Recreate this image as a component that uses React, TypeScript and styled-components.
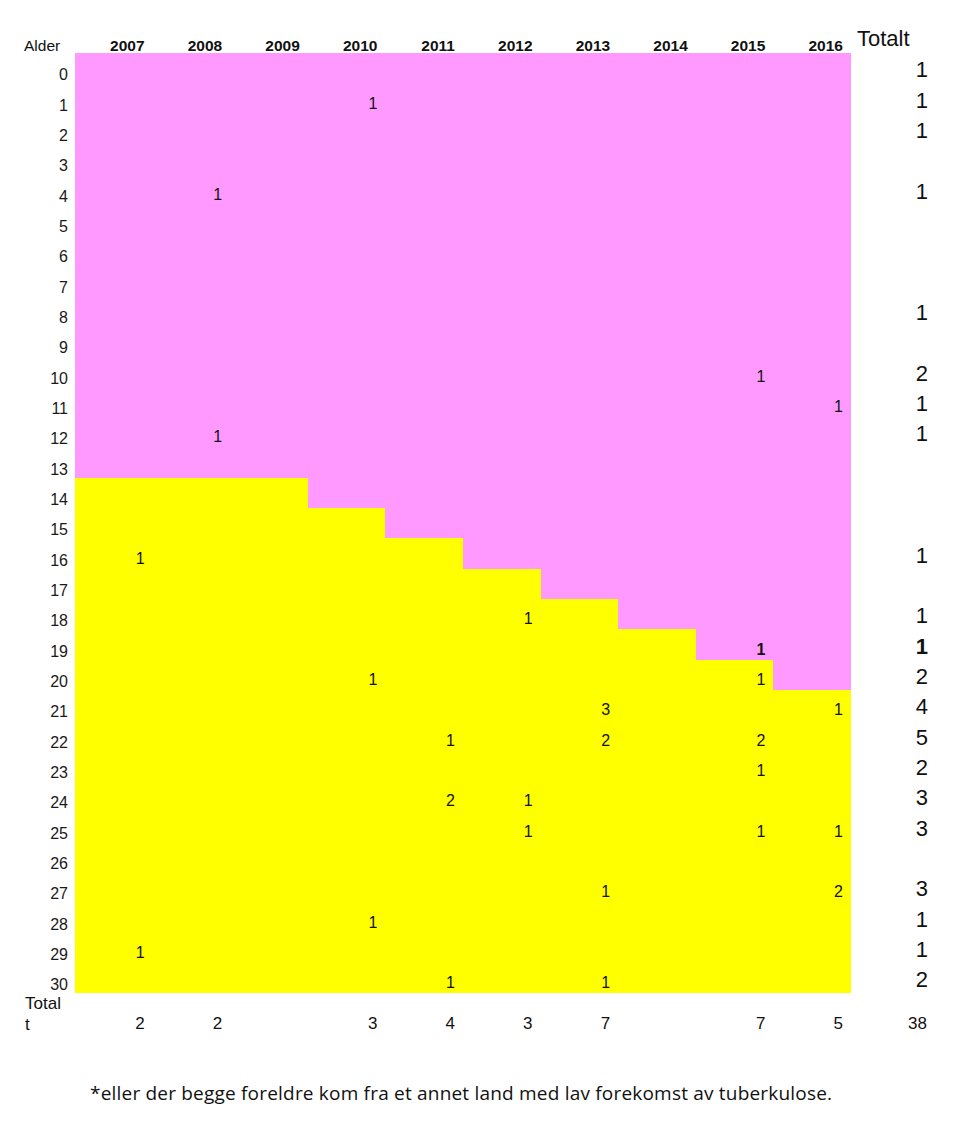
import React from 'react'
import styled, { createGlobalStyle } from 'styled-components'

const GlobalStyle = createGlobalStyle`
  body {
    margin: 0;
    background: #fff;
    color: #111;
    font-family: 'Liberation Sans', Arial, sans-serif;
  }
`

const years = [2007, 2008, 2009, 2010, 2011, 2012, 2013, 2014, 2015, 2016]
// første alder som er gul, per år
const yellowFrom = [14, 14, 14, 15, 16, 17, 18, 19, 20, 21]

// alder -> { kolonneindeks: antall }
const cases: Record<number, Record<number, number>> = {
  1: { 3: 1 },
  4: { 1: 1 },
  10: { 8: 1 },
  11: { 9: 1 },
  12: { 1: 1 },
  16: { 0: 1 },
  18: { 5: 1 },
  19: { 8: 1 },
  20: { 3: 1, 8: 1 },
  21: { 6: 3, 9: 1 },
  22: { 4: 1, 6: 2, 8: 2 },
  23: { 8: 1 },
  24: { 4: 2, 5: 1 },
  25: { 5: 1, 8: 1, 9: 1 },
  27: { 6: 1, 9: 2 },
  28: { 3: 1 },
  29: { 0: 1 },
  30: { 4: 1, 6: 1 },
}

const rowTotals: Record<number, number> = {
  0: 1, 1: 1, 2: 1, 4: 1, 8: 1, 10: 2, 11: 1, 12: 1, 16: 1, 18: 1,
  19: 1, 20: 2, 21: 4, 22: 5, 23: 2, 24: 3, 25: 3, 27: 3, 28: 1, 29: 1, 30: 2,
}

const yearTotals = [2, 2, null, 3, 4, 3, 7, null, 7, 5]
const boldRow = 19

const ages = Array.from({ length: 31 }, (_, i) => i)

const Page = styled.div`
  width: 970px;
  min-height: 1134px;
`

const Sheet = styled.div`
  display: grid;
  grid-template-columns: 53px repeat(10, 77.6px) 79px;
  grid-template-rows: 53px repeat(31, 30.33px) auto;
  margin-left: 22px;
`

const Cell = styled.div`
  display: flex;
  align-items: flex-end;
  line-height: 1;
  white-space: nowrap;
`

const CornerLabel = styled(Cell)`
  font-size: 15.5px;
  padding-left: 2px;
`

const YearHead = styled(Cell)`
  justify-content: flex-end;
  font-size: 15.5px;
  font-weight: 700;
  padding-right: 8px;
`

const TotalHead = styled(Cell)`
  font-size: 22px;
  padding-left: 6px;
  padding-bottom: 3px;
`

const AgeLabel = styled(Cell)`
  justify-content: flex-end;
  font-size: 16px;
  padding-right: 7px;
  color: #1a1a1a;
`

const DataCell = styled(Cell)<{ $yellow: boolean; $bold?: boolean }>`
  justify-content: flex-end;
  font-size: 16px;
  padding-right: 8px;
  padding-bottom: 2px;
  background: ${p => (p.$yellow ? '#ffff00' : '#ff99ff')};
  font-weight: ${p => (p.$bold ? 700 : 400)};
`

const RowTotal = styled(Cell)<{ $bold?: boolean }>`
  justify-content: flex-end;
  font-size: 22px;
  padding-right: 2px;
  padding-bottom: 2px;
  font-weight: ${p => (p.$bold ? 700 : 400)};
`

const FootLabel = styled.div`
  font-size: 17px;
  line-height: 21px;
  padding: 0 10px 0 3px;
  word-break: break-all;
`

const FootValue = styled(Cell)`
  justify-content: flex-end;
  font-size: 17px;
  line-height: 22px;
  padding-right: 8px;
`

const FootTotal = styled(FootValue)`
  padding-right: 3px;
`

const Note = styled.p`
  margin: 45px 0 0 90px;
  font-family: 'Open Sans', 'Noto Sans', sans-serif;
  font-size: 19px;
  letter-spacing: 0.2px;
  color: #111;
`

export default function App() {
  return (
    <Page>
      <GlobalStyle />
      <Sheet>
        <CornerLabel>Alder</CornerLabel>
        {years.map(y => (
          <YearHead key={y}>{y}</YearHead>
        ))}
        <TotalHead>Totalt</TotalHead>

        {ages.map(age => (
          <React.Fragment key={age}>
            <AgeLabel>{age}</AgeLabel>
            {years.map((y, col) => (
              <DataCell
                key={y}
                $yellow={age >= yellowFrom[col]}
                $bold={age === boldRow}
              >
                {cases[age]?.[col] ?? ''}
              </DataCell>
            ))}
            <RowTotal $bold={age === boldRow}>{rowTotals[age] ?? ''}</RowTotal>
          </React.Fragment>
        ))}

        <FootLabel>Totalt</FootLabel>
        {yearTotals.map((v, i) => (
          <FootValue key={i}>{v ?? ''}</FootValue>
        ))}
        <FootTotal>38</FootTotal>
      </Sheet>
      <Note>*eller der begge foreldre kom fra et annet land med lav forekomst av tuberkulose.</Note>
    </Page>
  )
}
